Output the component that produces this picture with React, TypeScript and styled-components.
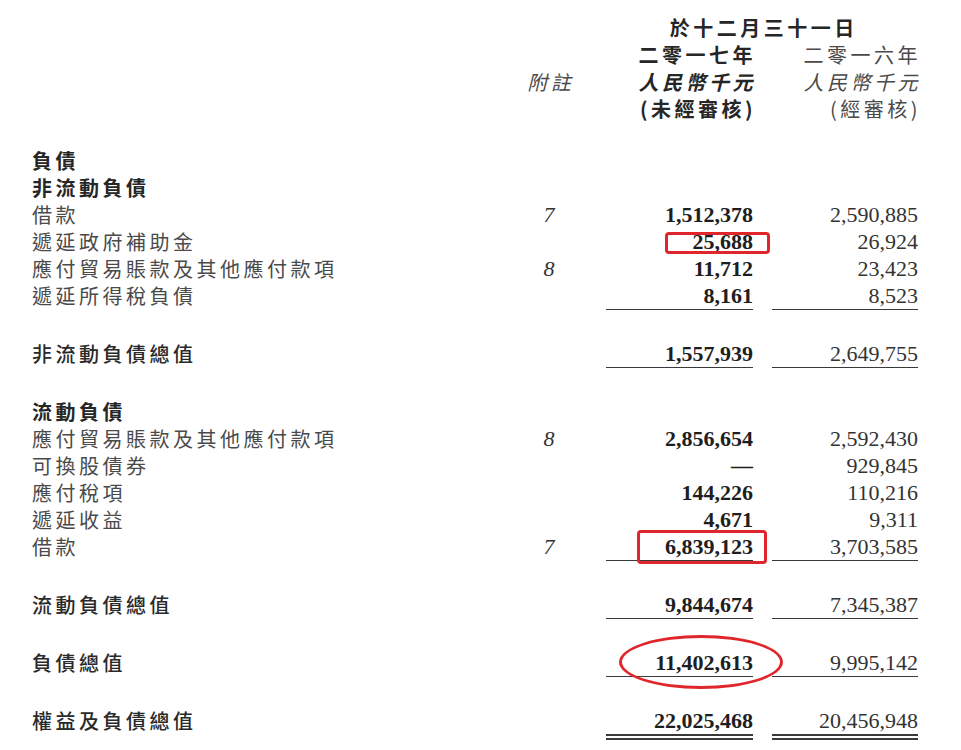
import React from "react";
import styled, { createGlobalStyle, css } from "styled-components";

const GlobalStyle = createGlobalStyle`
  html, body {
    margin: 0;
    padding: 0;
    background: #ffffff;
  }
  body {
    font-family: "Noto Sans CJK TC", "Noto Sans", sans-serif;
  }
`;

type Mark = {
  kind: "box" | "oval";
  top: number;
  right: number;
  bottom: number;
  left: number;
};

type LineRow = {
  label: string;
  note?: string;
  cur?: string;
  prev?: string;
  tone?: "heading" | "item" | "total";
  gapBefore?: boolean;
  rule?: "single" | "double";
  mark?: Mark;
};

const rows: LineRow[] = [
  { label: "負債", tone: "heading" },
  { label: "非流動負債", tone: "heading" },
  { label: "借款", note: "7", cur: "1,512,378", prev: "2,590,885" },
  {
    label: "遞延政府補助金",
    cur: "25,688",
    prev: "26,924",
    mark: { kind: "box", top: 4, right: -17, bottom: 1, left: 59 },
  },
  { label: "應付貿易賬款及其他應付款項", note: "8", cur: "11,712", prev: "23,423" },
  { label: "遞延所得稅負債", cur: "8,161", prev: "8,523", rule: "single" },
  {
    label: "非流動負債總值",
    tone: "total",
    gapBefore: true,
    cur: "1,557,939",
    prev: "2,649,755",
    rule: "single",
  },
  { label: "流動負債", tone: "heading", gapBefore: true },
  { label: "應付貿易賬款及其他應付款項", note: "8", cur: "2,856,654", prev: "2,592,430" },
  { label: "可換股債券", cur: "—", prev: "929,845" },
  { label: "應付稅項", cur: "144,226", prev: "110,216" },
  { label: "遞延收益", cur: "4,671", prev: "9,311" },
  {
    label: "借款",
    note: "7",
    cur: "6,839,123",
    prev: "3,703,585",
    rule: "single",
    mark: { kind: "box", top: -3, right: -14, bottom: -4, left: 31 },
  },
  {
    label: "流動負債總值",
    tone: "total",
    gapBefore: true,
    cur: "9,844,674",
    prev: "7,345,387",
    rule: "single",
  },
  {
    label: "負債總值",
    tone: "total",
    gapBefore: true,
    cur: "11,402,613",
    prev: "9,995,142",
    rule: "single",
    mark: { kind: "oval", top: -14, right: -30, bottom: -13, left: 13 },
  },
  {
    label: "權益及負債總值",
    tone: "total",
    gapBefore: true,
    cur: "22,025,468",
    prev: "20,456,948",
    rule: "double",
  },
];

const Sheet = styled.div`
  width: 961px;
  box-sizing: border-box;
  padding: 14px 43px 20px 32px;
  color: #2b2b2b;
`;

const Grid = styled.div<{ $gapBefore?: boolean }>`
  display: grid;
  grid-template-columns: 1fr 76px 147px 146px;
  column-gap: 19px;
  margin-top: ${(p) => (p.$gapBefore ? "30px" : "0")};
`;

const Head = styled.div`
  display: grid;
  grid-template-columns: 1fr 76px 147px 146px;
  grid-template-rows: repeat(4, 27px);
  column-gap: 19px;
  margin-bottom: 25px;
`;

const HeadText = styled.div<{
  $col: string;
  $row: number;
  $bold?: boolean;
  $slant?: boolean;
  $align?: "right" | "center";
}>`
  grid-column: ${(p) => p.$col};
  grid-row: ${(p) => p.$row};
  font-family: "Noto Sans CJK TC", "Noto Sans", sans-serif;
  font-size: 20px;
  line-height: 27px;
  letter-spacing: 3.5px;
  white-space: nowrap;
  text-align: ${(p) => p.$align ?? "right"};
  font-weight: ${(p) => (p.$bold ? 700 : 400)};
  font-style: ${(p) => (p.$slant ? "italic" : "normal")};
  color: ${(p) => (p.$bold ? "#262626" : "#4a4a4a")};
  margin-right: ${(p) => (p.$align === "center" ? "0" : "-3px")};
  padding-left: ${(p) => (p.$align === "center" ? "3.5px" : "0")};
`;

const toneStyles = {
  heading: css`
    font-weight: 700;
    color: #262626;
  `,
  total: css`
    font-weight: 500;
    color: #2a2a2a;
  `,
  item: css`
    font-weight: 400;
    color: #4a4a4a;
  `,
};

const Label = styled.div<{ $tone: "heading" | "item" | "total" }>`
  font-family: "Noto Sans CJK TC", "Noto Sans", sans-serif;
  font-size: 20px;
  line-height: 27px;
  height: 27px;
  letter-spacing: 3.5px;
  white-space: nowrap;
  ${(p) => toneStyles[p.$tone]}
`;

const Note = styled.div`
  font-family: "Liberation Serif", "Times New Roman", serif;
  font-style: italic;
  font-size: 22px;
  line-height: 27px;
  text-align: center;
  color: #333;
`;

const Amount = styled.div<{ $bold?: boolean; $rule?: "single" | "double" }>`
  position: relative;
  font-family: "Liberation Serif", "Times New Roman", serif;
  font-size: 22px;
  line-height: 27px;
  height: 27px;
  text-align: right;
  white-space: nowrap;
  font-weight: ${(p) => (p.$bold ? 700 : 400)};
  color: ${(p) => (p.$bold ? "#1e1e1e" : "#333333")};
  ${(p) =>
    p.$rule === "single" &&
    css`
      border-bottom: 1px solid #3a3a3a;
    `}
  ${(p) =>
    p.$rule === "double" &&
    css`
      border-bottom: 6px double #3a3a3a;
    `}
`;

const Highlight = styled.span<{ $mark: Mark }>`
  position: absolute;
  top: ${(p) => p.$mark.top}px;
  right: ${(p) => p.$mark.right}px;
  bottom: ${(p) => p.$mark.bottom}px;
  left: ${(p) => p.$mark.left}px;
  border: 3px solid #e0252b;
  border-radius: ${(p) => (p.$mark.kind === "oval" ? "50%" : "4px")};
  pointer-events: none;
`;

export default function App() {
  return (
    <>
      <GlobalStyle />
      <Sheet>
        <Head>
          <HeadText $col="3 / 5" $row={1} $bold $align="center">
            於十二月三十一日
          </HeadText>
          <HeadText $col="3" $row={2} $bold>
            二零一七年
          </HeadText>
          <HeadText $col="4" $row={2}>
            二零一六年
          </HeadText>
          <HeadText $col="2" $row={3} $slant $align="center">
            附註
          </HeadText>
          <HeadText $col="3" $row={3} $bold $slant>
            人民幣千元
          </HeadText>
          <HeadText $col="4" $row={3} $slant>
            人民幣千元
          </HeadText>
          <HeadText $col="3" $row={4} $bold>
            (未經審核)
          </HeadText>
          <HeadText $col="4" $row={4}>
            (經審核)
          </HeadText>
        </Head>
        {rows.map((r, i) => (
          <Grid key={i} $gapBefore={r.gapBefore}>
            <Label $tone={r.tone ?? "item"}>{r.label}</Label>
            <Note>{r.note}</Note>
            <Amount $bold $rule={r.rule}>
              {r.cur}
              {r.mark && <Highlight $mark={r.mark} />}
            </Amount>
            <Amount $rule={r.rule}>{r.prev}</Amount>
          </Grid>
        ))}
      </Sheet>
    </>
  );
}
